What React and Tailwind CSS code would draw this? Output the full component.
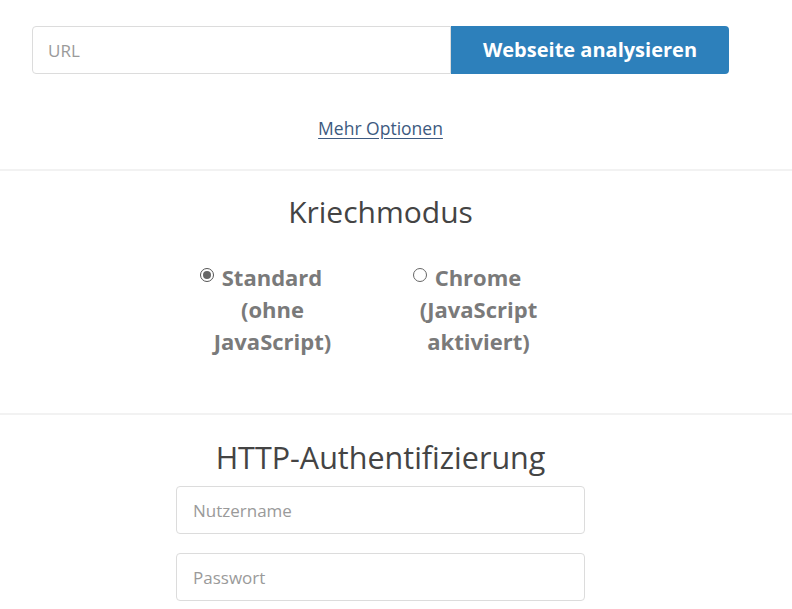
const font = { fontFamily: '"Open Sans", "Liberation Sans", sans-serif' };

const CrawlOption = ({ checked, children }) => (
  <label className="w-[150px] text-center text-[22px] font-bold leading-[32px] text-[#7a7a7a]">
    <span
      className={`-ml-[23px] mr-[8px] inline-block h-[14px] w-[14px] rounded-full border align-[4px] ${
        checked ? 'border-[#555] bg-white p-[2px]' : 'border-[#666] bg-white'
      }`}
    >
      {checked && <span className="block h-full w-full rounded-full bg-[#666]" />}
    </span>
    {children}
  </label>
);

export default function App() {
  return (
    <div className="min-h-screen bg-white text-[#444]" style={font}>
      {/* URL form */}
      <div className="pr-[31px] pt-[26px]">
        <div className="flex justify-center">
          <input
            placeholder="URL"
            className="h-[48px] w-[419px] rounded-l-[4px] border border-[#dcdcdc] px-[15px] text-[17px] placeholder:text-[#9a9a9a] outline-none"
          />
          <button className="h-[48px] w-[278px] rounded-r-[4px] bg-[#2d80bb] text-[20px] font-bold text-white">
            Webseite analysieren
          </button>
        </div>
        <div className="mt-[41px] pb-[28px] text-center">
          <a href="#" className="text-[17.5px] text-[#3d5a80] underline underline-offset-[3px]">
            Mehr Optionen
          </a>
        </div>
      </div>

      {/* Crawl mode */}
      <div className="border-t-2 border-[#f2f2f2] pr-[31px] pb-[56px] pt-[19px]">
        <h2 className="text-center text-[30px] leading-[44px] text-[#444]">Kriechmodus</h2>
        <div className="mt-[27px] flex justify-center gap-[56px] pr-[10px]">
          <CrawlOption checked>Standard (ohne JavaScript)</CrawlOption>
          <CrawlOption>Chrome (JavaScript aktiviert)</CrawlOption>
        </div>
      </div>

      {/* HTTP auth */}
      <div className="border-t-2 border-[#f2f2f2] pr-[31px] pt-[20px]">
        <h2 className="text-center text-[30.5px] leading-[44px] text-[#444]">HTTP-Authentifizierung</h2>
        <div className="mx-auto mt-[7px] flex w-[409px] flex-col gap-[19px]">
          <input
            placeholder="Nutzername"
            className="h-[48px] rounded-[4px] border border-[#dcdcdc] px-[16px] text-[17px] placeholder:text-[#9a9a9a] outline-none"
          />
          <input
            placeholder="Passwort"
            type="password"
            className="h-[48px] rounded-[4px] border border-[#dcdcdc] px-[16px] text-[17px] placeholder:text-[#9a9a9a] outline-none"
          />
        </div>
      </div>
    </div>
  );
}
